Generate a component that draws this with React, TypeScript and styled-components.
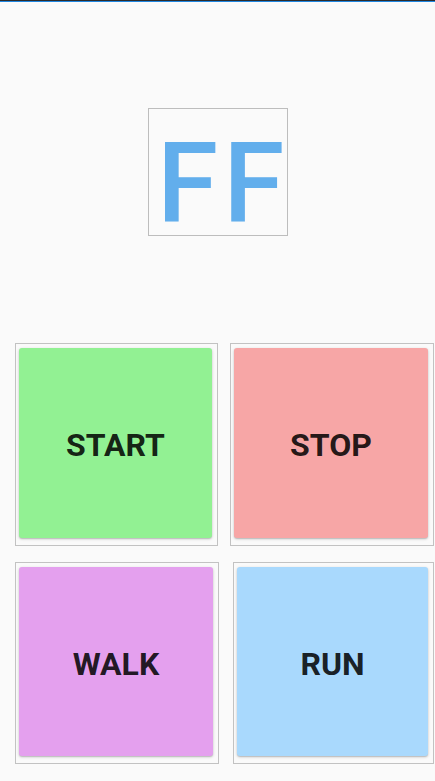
import React from "react";
import styled, { createGlobalStyle } from "styled-components";

const Global = createGlobalStyle`
  html, body { margin: 0; padding: 0; background: #fafafa; }
  body { font-family: Roboto, "Noto Sans", sans-serif; }
`;

const Page = styled.div`
  width: 435px;
  height: 781px;
  background: #fafafa;
  display: flex;
  flex-direction: column;
  border-top: 1px solid #2b2b2b;
  box-sizing: border-box;
  position: relative;
`;

const TopLine = styled.div`
  height: 1px;
  background: #1f86e0;
`;

const LogoArea = styled.div`
  display: flex;
  justify-content: center;
  padding-top: 106px;
  padding-left: 1px;
  height: 236px;
  box-sizing: border-box;
`;

const LogoBox = styled.div`
  width: 140px;
  height: 128px;
  box-sizing: border-box;
  border: 1px solid #bdbdbd;
  padding-left: 8px;
  display: flex;
  align-items: center;
  justify-content: flex-start;
`;

const LogoText = styled.div`
  display: flex;
  gap: 5px;
  font-family: Roboto, sans-serif;
  font-weight: 500;
  font-size: 111px;
  line-height: 1;
  color: #62aeec;
  margin-top: 24px;
  white-space: nowrap;
`;

const Grid = styled.div`
  display: flex;
  flex-direction: column;
  gap: 16px;
  padding-top: 105px;
  padding-left: 15px;
`;

const Row = styled.div<{ $gap: number }>`
  display: flex;
  gap: ${(p) => p.$gap}px;
`;

const Cell = styled.div<{ $w: number; $h: number }>`
  width: ${(p) => p.$w}px;
  height: ${(p) => p.$h}px;
  box-sizing: border-box;
  border: 1px solid #c2c2c2;
  padding: 4px 5px 7px 3px;
  display: flex;
`;

const Card = styled.button<{ $bg: string }>`
  flex: 1;
  border: none;
  border-radius: 3px;
  background: ${(p) => p.$bg};
  box-shadow: 0 1px 3px rgba(0, 0, 0, 0.22), 0 1px 1px rgba(0, 0, 0, 0.1);
  display: flex;
  align-items: center;
  justify-content: center;
  font-family: Roboto, sans-serif;
  font-weight: 700;
  font-size: 32px;
  color: rgba(0, 0, 0, 0.87);
  padding: 4px 0 0 0;
  cursor: pointer;
`;

export default function App() {
  return (
    <>
      <Global />
      <Page>
        <TopLine />
        <LogoArea>
          <LogoBox>
            <LogoText>
              <span>F</span>
              <span>F</span>
            </LogoText>
          </LogoBox>
        </LogoArea>
        <Grid>
          <Row $gap={12}>
            <Cell $w={203} $h={203}>
              <Card $bg="#92f193">START</Card>
            </Cell>
            <Cell $w={204} $h={203}>
              <Card $bg="#f7a6a6">STOP</Card>
            </Cell>
          </Row>
          <Row $gap={14}>
            <Cell $w={204} $h={202}>
              <Card $bg="#e4a0ee">WALK</Card>
            </Cell>
            <Cell $w={201} $h={202}>
              <Card $bg="#a9d9fd">RUN</Card>
            </Cell>
          </Row>
        </Grid>
      </Page>
    </>
  );
}
